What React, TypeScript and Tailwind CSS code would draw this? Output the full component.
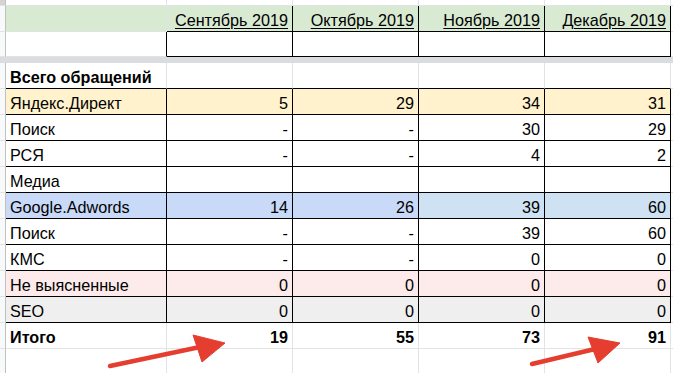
import React from "react";

type Cell = {
  t?: string;
  bg?: string;
  r?: "k" | "g";
  b?: "k" | "g";
  right?: boolean;
  bold?: boolean;
  u?: boolean;
};

function CellBox({ c, w }: { c: Cell; w: string }) {
  const rb = c.r === "k" ? "border-r-black" : "border-r-[#e2e3e3]";
  const bb = c.b === "k" ? "border-b-black" : "border-b-[#e2e3e3]";
  return (
    <div
      className={`${w} h-full shrink-0 border-r border-b ${rb} ${bb} flex items-end px-[4px] pb-[1px] overflow-hidden whitespace-nowrap ${
        c.right ? "justify-end" : "justify-start"
      } ${c.bold ? "font-bold" : ""}`}
      style={{ backgroundColor: c.bg ?? "#ffffff" }}
    >
      <span className={`leading-[20px] ${c.u ? "underline underline-offset-[2px] decoration-1" : ""}`}>{c.t}</span>
    </div>
  );
}

function Row({ h, cells, strip = "#f8f9fa", f = {} }: { h: string; cells: Cell[]; strip?: string; f?: Cell }) {
  const widths = ["w-[161px]", "w-[126px]", "w-[126px]", "w-[126px]", "w-[126px]"];
  return (
    <div className={`flex ${h}`}>
      <div className="w-[6px] h-full shrink-0 border-r border-b border-r-[#c0c0c0] border-b-[#e2e3e3]" style={{ backgroundColor: strip }} />
      {cells.map((c, i) => (
        <CellBox key={i} c={c} w={widths[i]} />
      ))}
      <div
        className={`flex-1 h-full border-b ${f.b === "k" ? "border-b-black" : "border-b-[#e2e3e3]"}`}
        style={{ backgroundColor: f.bg ?? "#ffffff" }}
      />
    </div>
  );
}

const months = ["Сентябрь 2019", "Октябрь 2019", "Ноябрь 2019", "Декабрь 2019"];

type DataRow = { label: string; vals: string[]; bgA: string; bgs: string[] };

const W = "#ffffff";
const data: DataRow[] = [
  { label: "Яндекс.Директ", vals: ["5", "29", "34", "31"], bgA: "#fff2cc", bgs: ["#fff2cc", "#fff2cc", "#fff2cc", "#fff2cc"] },
  { label: "Поиск", vals: ["-", "-", "30", "29"], bgA: W, bgs: [W, W, W, W] },
  { label: "РСЯ", vals: ["-", "-", "4", "2"], bgA: W, bgs: [W, W, W, W] },
  { label: "Медиа", vals: ["", "", "", ""], bgA: W, bgs: [W, W, W, W] },
  { label: "Google.Adwords", vals: ["14", "26", "39", "60"], bgA: "#c9daf8", bgs: ["#c9daf8", "#c9daf8", "#cfe2f3", "#cfe2f3"] },
  { label: "Поиск", vals: ["-", "-", "39", "60"], bgA: W, bgs: [W, W, W, W] },
  { label: "КМС", vals: ["-", "-", "0", "0"], bgA: W, bgs: [W, W, W, W] },
  { label: "Не выясненные", vals: ["0", "0", "0", "0"], bgA: "#fcebea", bgs: ["#fcebea", "#fcebea", "#fcebea", "#fcebea"] },
  { label: "SEO", vals: ["0", "0", "0", "0"], bgA: "#efefef", bgs: ["#efefef", "#efefef", "#efefef", "#efefef"] },
];

export default function App() {
  return (
    <div
      className="relative w-[673px] h-[373px] overflow-hidden bg-white text-black text-[16.2px]"
      style={{ fontFamily: '"Liberation Sans", Arial, sans-serif' }}
    >
      <Row h="h-[6px]" strip="#d4d4d4" cells={[{}, {}, {}, {}, {}]} />
      <Row
        h="h-[26px]"
        cells={[
          { bg: "#d9ead3", r: "g", b: "g" },
          ...months.map((m) => ({ t: m, bg: "#d9ead3", r: "k" as const, b: "k" as const, right: true, u: true })),
        ]}
      />
      <Row
        h="h-[25px]"
        cells={[
          { r: "k", b: "g" },
          { r: "k", b: "k" },
          { r: "k", b: "k" },
          { r: "k", b: "k" },
          { r: "k", b: "k" },
        ]}
      />
      <div className="h-[6px] bg-[#dadce0]" />
      <Row
        h="h-[26px]"
        cells={[
          { t: "Всего обращений", bold: true, r: "g", b: "k" },
          { r: "g", b: "k" },
          { r: "g", b: "k" },
          { r: "g", b: "k" },
          { r: "g", b: "k" },
        ]}
      />
      {data.map((d, i) => (
        <Row
          key={i}
          h="h-[26px]"
          cells={[
            { t: d.label, bg: d.bgA, r: "k", b: "k" },
            ...d.vals.map((v, j) => ({ t: v, bg: d.bgs[j], r: "k" as const, b: "k" as const, right: true })),
          ]}
        />
      ))}
      <Row
        h="h-[26px]"
        cells={[
          { t: "Итого", bold: true, r: "g", b: "g" },
          { t: "19", bold: true, right: true, r: "g", b: "g" },
          { t: "55", bold: true, right: true, r: "g", b: "g" },
          { t: "73", bold: true, right: true, r: "g", b: "g" },
          { t: "91", bold: true, right: true, r: "g", b: "g" },
        ]}
      />
      <Row h="h-[26px]" cells={[{}, {}, {}, {}, {}]} />

      <svg className="absolute inset-0 pointer-events-none" width="673" height="373" viewBox="0 0 673 373">
        <g fill="#e53e30" stroke="#e53e30">
          <line x1="110" y1="366" x2="200" y2="347" strokeWidth="4.5" strokeLinecap="round" />
          <polygon points="225,343 193,335 202,362" strokeWidth="1" strokeLinejoin="round" />
          <line x1="532" y1="364" x2="595" y2="349" strokeWidth="4.5" strokeLinecap="round" />
          <polygon points="620,343 588,337 598,363" strokeWidth="1" strokeLinejoin="round" />
        </g>
      </svg>
    </div>
  );
}
